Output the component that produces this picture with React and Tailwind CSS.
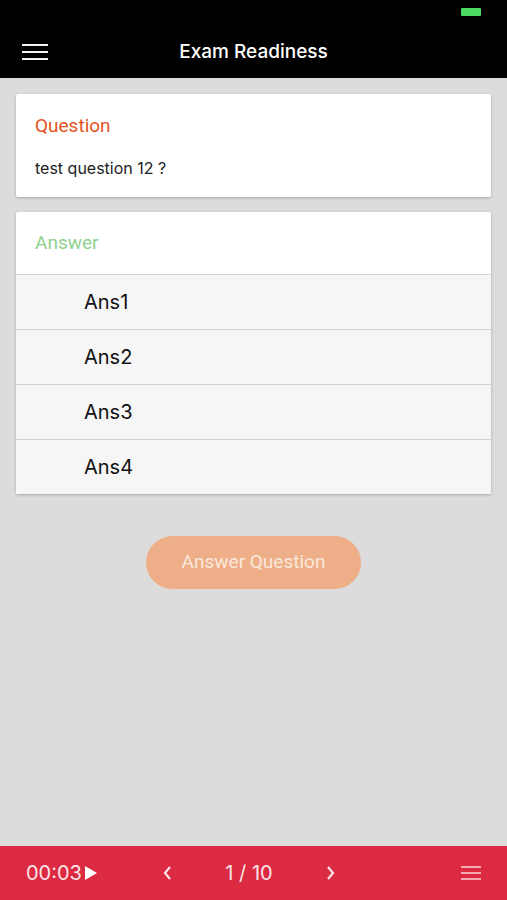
import { useState } from "react";

export default function App() {
  const [selected, setSelected] = useState(null)
  const answers = ["Ans1", "Ans2", "Ans3", "Ans4"]

  return (
    <div className="flex flex-col w-full h-[900px] bg-[#dcdcdc] font-['Inter',sans-serif]">
      {/* header */}
      <div className="bg-black h-[78px] shrink-0 relative">
        <div className="absolute right-[26px] top-[8px] w-[20px] h-[8px] bg-[#4cd964] rounded-[1px]"></div>
        <div className="flex items-center h-full pt-[26px] px-[22px]">
          <svg width="26" height="16" viewBox="0 0 26 16">
            <rect x="0" y="0" width="26" height="2" fill="#f2f2f2"/>
            <rect x="0" y="7" width="26" height="2" fill="#f2f2f2"/>
            <rect x="0" y="14" width="26" height="2" fill="#f2f2f2"/>
          </svg>
          <div className="flex-1 text-center text-white text-[19px] font-medium pr-[26px]">Exam Readiness</div>
        </div>
      </div>

      <div className="flex flex-col px-[16px] pt-[16px] gap-[15px]">
        <div className="bg-white rounded-[2px] shadow-[0_1px_3px_rgba(0,0,0,0.25)] px-[19px] pt-[20px] pb-[17px]">
          <div className="text-[#e4531f] text-[19px] leading-[24px] font-['Roboto',sans-serif]">Question</div>
          <div className="text-[#222] text-[16px] leading-[24px] mt-[18px]">test question 12 ?</div>
        </div>

        <div className="bg-white rounded-[2px] shadow-[0_1px_3px_rgba(0,0,0,0.25)]">
          <div className="text-[#8fd18f] text-[19px] font-['Roboto',sans-serif] px-[19px] h-[62px] flex items-center">Answer</div>
          {answers.map((a, i) => (
            <div
              key={a}
              onClick={() => setSelected(i)}
              className={"h-[55px] flex items-center pl-[68px] text-[20px] text-[#111] border-t border-[#d2d2d2] " + (selected === i ? "bg-[#ececec]" : "bg-[#f6f6f6]")}
            >
              {a}
            </div>
          ))}
        </div>
      </div>

      <div className="flex justify-center mt-[42px]">
        <button className="w-[215px] h-[53px] rounded-full bg-[#eeae87] text-[#fbe8dc] text-[19px] font-['Roboto',sans-serif]">Answer Question</button>
      </div>

      <div className="flex-1"></div>

      {/* footer */}
      <div className="bg-[#dc2a42] h-[54px] shrink-0 flex items-center px-[26px] text-[#fbe4e7]">
        <div className="flex items-center w-[120px] text-[20px]">
          00:03
          <svg width="12" height="14" viewBox="0 0 12 14" className="ml-[3px]">
            <path d="M0 0 L12 7 L0 14 Z" fill="#ffffff"/>
          </svg>
        </div>
        <div className="flex items-center justify-between w-[174px] ml-[16px]">
          <svg width="10" height="16" viewBox="0 0 10 16">
            <path d="M8 2 L3 8 L8 14" stroke="#fbe4e7" strokeWidth="2.2" fill="none"/>
          </svg>
          <span className="text-[20px]">1 / 10</span>
          <svg width="10" height="16" viewBox="0 0 10 16">
            <path d="M2 2 L7 8 L2 14" stroke="#fbe4e7" strokeWidth="2.2" fill="none"/>
          </svg>
        </div>
        <div className="flex-1"></div>
        <svg width="20" height="14" viewBox="0 0 20 14">
          <rect x="0" y="0" width="20" height="2" fill="#f4a9b3"/>
          <rect x="0" y="6" width="20" height="2" fill="#f4a9b3"/>
          <rect x="0" y="12" width="20" height="2" fill="#f4a9b3"/>
        </svg>
      </div>
    </div>
  );
}
